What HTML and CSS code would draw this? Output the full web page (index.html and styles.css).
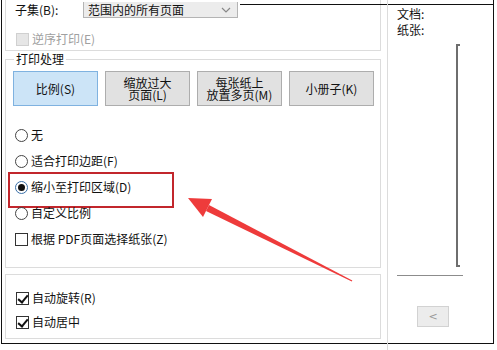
FILE: index.html
```html
<!DOCTYPE html>
<html lang="zh-CN">
<head>
    <meta charset="UTF-8">
    <title>打印设置</title>
    <link rel="stylesheet" href="styles.css">
</head>
<body>
    <div class="frame">
        <!-- Left: options -->
        <div class="left">
            <div class="group top-group">
                <div class="row subset">
                    <span class="label">子集(B):</span>
                    <div class="select">
                        <span>范围内的所有页面</span>
                        <svg width="10" height="6" viewBox="0 0 10 6"><path d="M1 1 L5 5 L9 1" fill="none" stroke="#888" stroke-width="1.2"/></svg>
                    </div>
                </div>
                <div class="row check disabled">
                    <span class="box"></span><span>逆序打印(E)</span>
                </div>
            </div>

            <fieldset class="group handling">
                <legend>打印处理</legend>
                <div class="buttons">
                    <button class="mode active">比例(S)</button>
                    <button class="mode"><span>缩放过大</span><span>页面(L)</span></button>
                    <button class="mode"><span>每张纸上</span><span>放置多页(M)</span></button>
                    <button class="mode">小册子(K)</button>
                </div>
                <div class="options">
                    <div class="row radio"><span class="dot"></span><span>无</span></div>
                    <div class="row radio"><span class="dot"></span><span>适合打印边距(F)</span></div>
                    <div class="row radio picked">
                        <span class="dot"></span><span>缩小至打印区域(D)</span>
                        <span class="mark"></span>
                    </div>
                    <div class="row radio"><span class="dot"></span><span>自定义比例</span></div>
                    <div class="row check"><span class="box"></span><span>根据 PDF页面选择纸张(Z)</span></div>
                </div>
            </fieldset>

            <div class="group bottom-group">
                <div class="row check on"><span class="box"></span><span>自动旋转(R)</span></div>
                <div class="row check on"><span class="box"></span><span>自动居中</span></div>
            </div>
        </div>

        <!-- Right: preview -->
        <div class="right">
            <div class="info">文档:</div>
            <div class="info">纸张:</div>
            <div class="preview"></div>
            <div class="rule"></div>
            <button class="prev">&lt;</button>
        </div>
    </div>

    <svg class="arrow" width="497" height="350" viewBox="0 0 497 350">
        <polygon points="188,198 212,199 203,217" fill="#ee3b3b"/>
        <polygon points="209,205 352.3,280.6 351.8,281.4 206,211" fill="#ee3b3b"/>
    </svg>
</body>
</html>
```

FILE: styles.css
```css
* {
    margin: 0;
    padding: 0;
    box-sizing: border-box;
}

body {
    width: 497px;
    height: 350px;
    background: #fff;
    font-family: "Noto Sans CJK SC", "Microsoft YaHei", sans-serif;
    font-size: 12px;
    line-height: 16px;
    color: #111;
    position: relative;
    overflow: hidden;
}

/* Screenshot frame */
.frame {
    position: relative;
    margin-left: 1px;
    width: 493px;
    height: 344px;
    border: 1px solid #111;
    border-top: none;
    display: flex;
}

.frame::before {
    content: "";
    position: absolute;
    top: 4px;
    left: 238px;
    right: -1px;
    height: 1px;
    background: #111;
}

/* Left panel */
.left {
    width: 385px;
    padding-left: 3px;
}

.group {
    width: 376px;
    border: 1px solid #dcdcdc;
}

.top-group {
    height: 51px;
    border-top: none;
    padding-top: 2px;
}

.row {
    display: flex;
    align-items: center;
    position: relative;
}

.subset {
    height: 16px;
    padding-left: 9px;
}

.subset .label {
    width: 68px;
}

.select {
    width: 155px;
    height: 16px;
    background: #ececec;
    border: 1px solid #b4b4b4;
    border-top: none;
    display: flex;
    align-items: center;
    justify-content: space-between;
    padding: 0 6px 0 4px;
}

.top-group .check {
    margin-top: 13px;
}

.check, .radio {
    padding-left: 10px;
    height: 16px;
}

.box {
    width: 13px;
    height: 13px;
    border: 1px solid #333;
    background: #fff;
    margin-right: 3px;
    position: relative;
}

.disabled {
    color: #a0a0a0;
}

.disabled .box {
    background: #e6e6e6;
    border-color: #d0d0d0;
}

.on .box::after {
    content: "";
    position: absolute;
    left: 3px;
    top: 0;
    width: 4px;
    height: 8px;
    border: solid #111;
    border-width: 0 2px 2px 0;
    transform: rotate(40deg);
}

/* Print handling */
.handling {
    height: 217px;
    padding: 0;
}

.handling legend {
    margin-left: 8px;
    padding: 0 2px;
    line-height: 16px;
}

.buttons {
    display: flex;
    gap: 7px;
    padding: 4px 0 0 7px;
}

.mode {
    width: 85px;
    height: 35px;
    display: flex;
    flex-direction: column;
    align-items: center;
    justify-content: center;
    font-family: inherit;
    font-size: 12px;
    line-height: 14px;
    color: #111;
    background: #e1e1e1;
    border: 1px solid #adadad;
}

.mode span {
    display: block;
    height: 12px;
    line-height: 12px;
}

.mode.active {
    background: #cce4f7;
    border-color: #7fb2e0;
}

.options {
    padding-top: 16px;
}

.options .row {
    height: 26px;
    padding-left: 9px;
}

.dot {
    width: 13px;
    height: 13px;
    border: 1px solid #444;
    border-radius: 50%;
    margin-right: 3px;
    position: relative;
}

.picked .dot {
    border-color: #3a6fa8;
}

.picked .dot::after {
    content: "";
    position: absolute;
    left: 2px;
    top: 2px;
    width: 7px;
    height: 7px;
    border-radius: 50%;
    background: #111;
}

/* Red annotation box */
.mark {
    position: absolute;
    left: 2px;
    top: -2px;
    width: 166px;
    height: 36px;
    border: 2px solid #c2262c;
}

.bottom-group {
    margin-top: 6px;
    height: 65px;
    padding-top: 11px;
}

.bottom-group .row {
    height: 24px;
    padding-left: 10px;
}

/* Right panel */
.right {
    flex: 1;
    position: relative;
    border-left: 1px solid #dcdcdc;
    padding: 6px 0 0 9px;
}

.right::after {
    content: "";
    position: absolute;
    left: -1px;
    bottom: -8px;
    width: 1px;
    height: 8px;
    background: #dcdcdc;
}

.preview {
    margin: 6px 0 0 59px;
    width: 4px;
    height: 223px;
    border: solid #6e6e6e;
    border-width: 2px 0 2px 2px;
}

.rule {
    margin-top: 8px;
    width: 66px;
    height: 1px;
    background: #8c8c8c;
}

.prev {
    display: block;
    margin: 30px 0 0 20px;
    width: 32px;
    height: 21px;
    background: #ececec;
    border: 1px solid #d2d2d2;
    color: #999;
    font-family: "DejaVu Sans", sans-serif;
    font-size: 11px;
}

/* Red arrow annotation */
.arrow {
    position: absolute;
    left: 0;
    top: 0;
    pointer-events: none;
}
```
